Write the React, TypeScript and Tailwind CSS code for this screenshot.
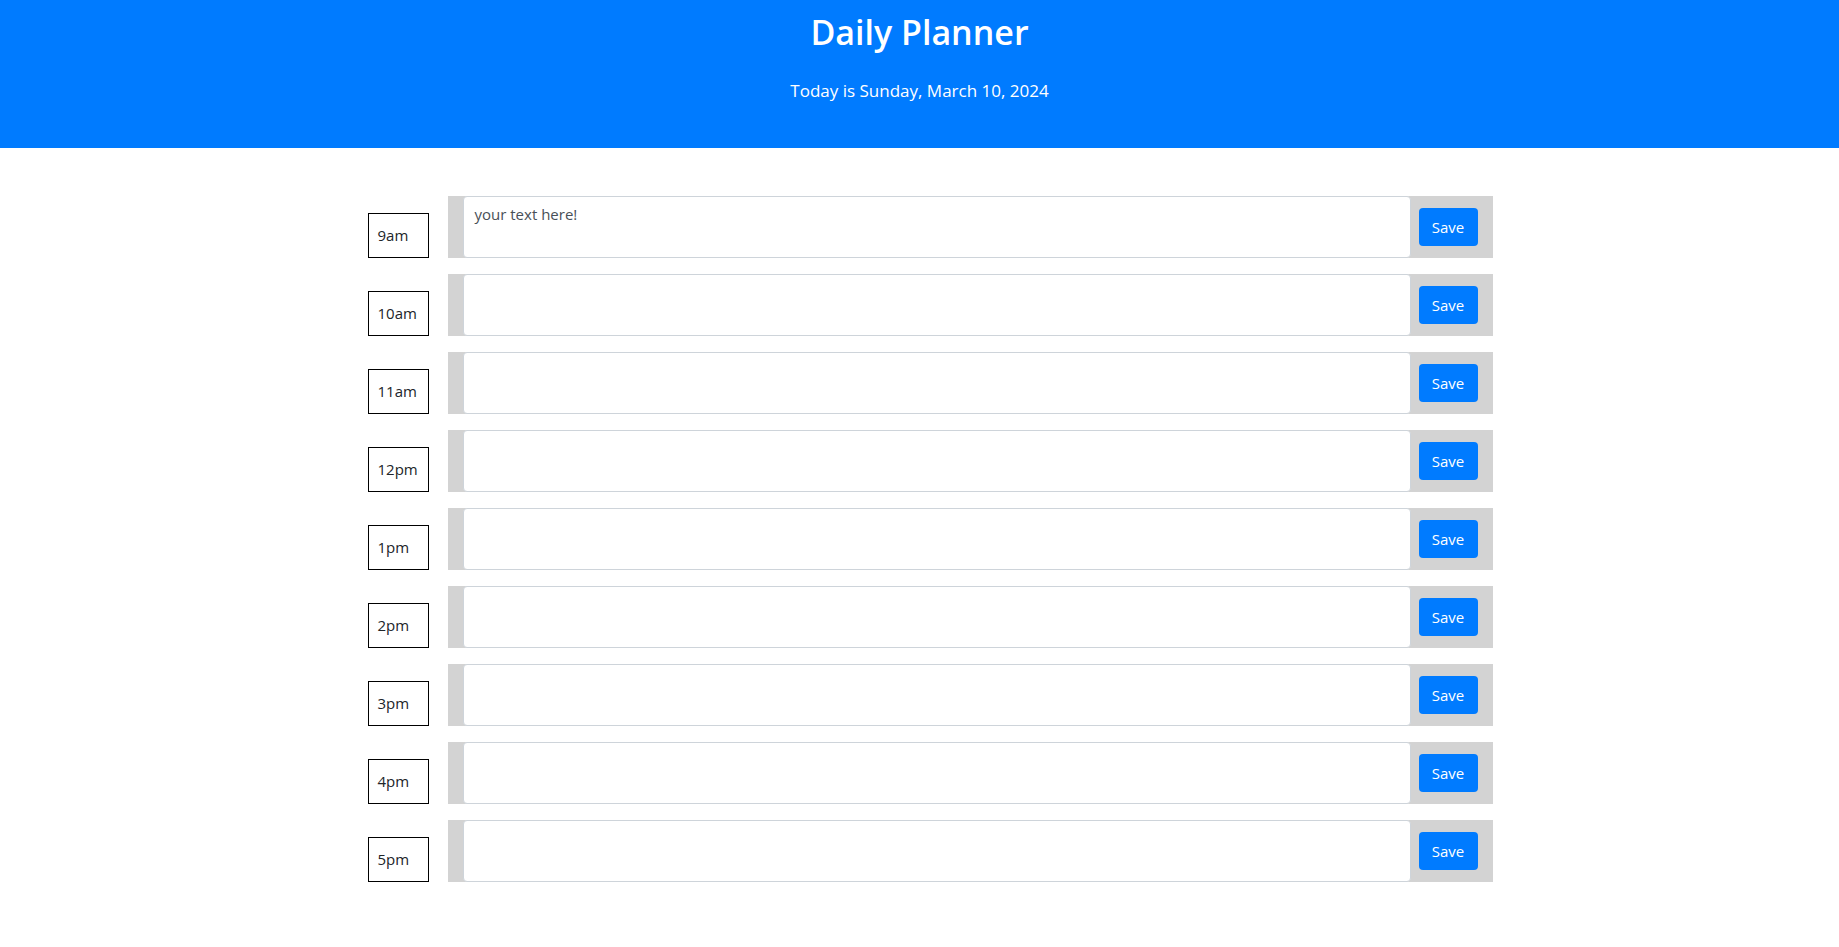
const hours = ["9am", "10am", "11am", "12pm", "1pm", "2pm", "3pm", "4pm", "5pm"];

function HourRow({ hour, first }: { hour: string; first: boolean }) {
  return (
    <div className="flex items-end h-[62px]">
      <div className="w-[80px] shrink-0">
        <div className="w-[61px] h-[45px] border border-black pl-[9px] pt-[11px] text-[15px] leading-[20px] text-[#212529]">
          {hour}
        </div>
      </div>
      <div className="flex flex-1 h-full bg-[#d3d3d3] pl-[15px] pr-[15px]">
        <textarea
          className="flex-1 h-full bg-white border border-[#ced4da] rounded-[4px] px-[11px] py-[6px] text-[15px] leading-[22px] text-[#495057] resize-none outline-none placeholder:text-[#495057]"
          placeholder={first ? "your text here!" : ""}
        />
        <div className="flex items-center pl-[8px]">
          <button className="w-[59px] h-[38px] bg-[#007bff] rounded-[4px] text-white text-[15px]">
            Save
          </button>
        </div>
      </div>
    </div>
  );
}

export default function App() {
  return (
    <div className="min-h-screen bg-white font-['Open_Sans',sans-serif]">
      <header className="h-[148px] bg-[#007bff] text-white text-center pt-[10px]">
        <h1 className="text-[34px] leading-[44px] font-semibold">Daily Planner</h1>
        <p className="mt-[25px] text-[17px] leading-[24px]">Today is Sunday, March 10, 2024</p>
      </header>
      <main className="mx-auto w-[1140px] pt-[48px]">
        <div className="ml-[18px] mr-[-3px] flex flex-col gap-[16px]">
          {hours.map((h, i) => (
            <HourRow key={h} hour={h} first={i === 0} />
          ))}
        </div>
      </main>
    </div>
  );
}
